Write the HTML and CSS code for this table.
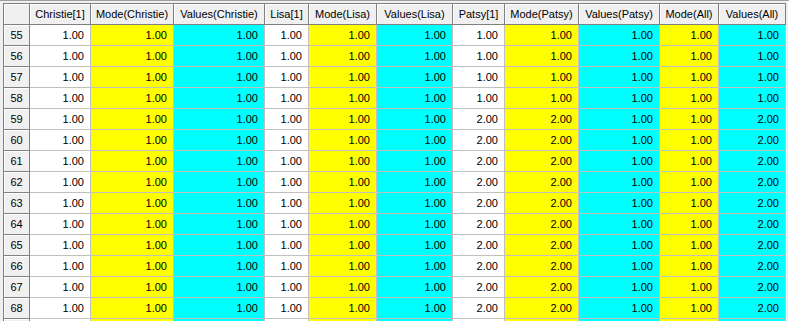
FILE: index.html
```html
<!DOCTYPE html>
<html>
<head>
<meta charset="utf-8">
<link rel="stylesheet" href="styles.css">
</head>
<body>
<div class="frame">
<table class="grid">
<thead>
<tr>
<th class="corner w0"></th>
<th class="w1">Christie[1]</th>
<th class="w2">Mode(Christie)</th>
<th class="w3">Values(Christie)</th>
<th class="w4">Lisa[1]</th>
<th class="w5">Mode(Lisa)</th>
<th class="w6">Values(Lisa)</th>
<th class="w7">Patsy[1]</th>
<th class="w8">Mode(Patsy)</th>
<th class="w9">Values(Patsy)</th>
<th class="w10">Mode(All)</th>
<th class="w11">Values(All)</th>
</tr>
</thead>
<tbody>
<tr><th>55</th><td>1.00</td><td class="y">1.00</td><td class="c">1.00</td><td>1.00</td><td class="y">1.00</td><td class="c">1.00</td><td>1.00</td><td class="y">1.00</td><td class="c">1.00</td><td class="y">1.00</td><td class="c">1.00</td></tr>
<tr><th>56</th><td>1.00</td><td class="y">1.00</td><td class="c">1.00</td><td>1.00</td><td class="y">1.00</td><td class="c">1.00</td><td>1.00</td><td class="y">1.00</td><td class="c">1.00</td><td class="y">1.00</td><td class="c">1.00</td></tr>
<tr><th>57</th><td>1.00</td><td class="y">1.00</td><td class="c">1.00</td><td>1.00</td><td class="y">1.00</td><td class="c">1.00</td><td>1.00</td><td class="y">1.00</td><td class="c">1.00</td><td class="y">1.00</td><td class="c">1.00</td></tr>
<tr><th>58</th><td>1.00</td><td class="y">1.00</td><td class="c">1.00</td><td>1.00</td><td class="y">1.00</td><td class="c">1.00</td><td>1.00</td><td class="y">1.00</td><td class="c">1.00</td><td class="y">1.00</td><td class="c">1.00</td></tr>
<tr><th>59</th><td>1.00</td><td class="y">1.00</td><td class="c">1.00</td><td>1.00</td><td class="y">1.00</td><td class="c">1.00</td><td>2.00</td><td class="y">2.00</td><td class="c">1.00</td><td class="y">1.00</td><td class="c">2.00</td></tr>
<tr><th>60</th><td>1.00</td><td class="y">1.00</td><td class="c">1.00</td><td>1.00</td><td class="y">1.00</td><td class="c">1.00</td><td>2.00</td><td class="y">2.00</td><td class="c">1.00</td><td class="y">1.00</td><td class="c">2.00</td></tr>
<tr><th>61</th><td>1.00</td><td class="y">1.00</td><td class="c">1.00</td><td>1.00</td><td class="y">1.00</td><td class="c">1.00</td><td>2.00</td><td class="y">2.00</td><td class="c">1.00</td><td class="y">1.00</td><td class="c">2.00</td></tr>
<tr><th>62</th><td>1.00</td><td class="y">1.00</td><td class="c">1.00</td><td>1.00</td><td class="y">1.00</td><td class="c">1.00</td><td>2.00</td><td class="y">2.00</td><td class="c">1.00</td><td class="y">1.00</td><td class="c">2.00</td></tr>
<tr><th>63</th><td>1.00</td><td class="y">1.00</td><td class="c">1.00</td><td>1.00</td><td class="y">1.00</td><td class="c">1.00</td><td>2.00</td><td class="y">2.00</td><td class="c">1.00</td><td class="y">1.00</td><td class="c">2.00</td></tr>
<tr><th>64</th><td>1.00</td><td class="y">1.00</td><td class="c">1.00</td><td>1.00</td><td class="y">1.00</td><td class="c">1.00</td><td>2.00</td><td class="y">2.00</td><td class="c">1.00</td><td class="y">1.00</td><td class="c">2.00</td></tr>
<tr><th>65</th><td>1.00</td><td class="y">1.00</td><td class="c">1.00</td><td>1.00</td><td class="y">1.00</td><td class="c">1.00</td><td>2.00</td><td class="y">2.00</td><td class="c">1.00</td><td class="y">1.00</td><td class="c">2.00</td></tr>
<tr><th>66</th><td>1.00</td><td class="y">1.00</td><td class="c">1.00</td><td>1.00</td><td class="y">1.00</td><td class="c">1.00</td><td>2.00</td><td class="y">2.00</td><td class="c">1.00</td><td class="y">1.00</td><td class="c">2.00</td></tr>
<tr><th>67</th><td>1.00</td><td class="y">1.00</td><td class="c">1.00</td><td>1.00</td><td class="y">1.00</td><td class="c">1.00</td><td>2.00</td><td class="y">2.00</td><td class="c">1.00</td><td class="y">1.00</td><td class="c">2.00</td></tr>
<tr><th>68</th><td>1.00</td><td class="y">1.00</td><td class="c">1.00</td><td>1.00</td><td class="y">1.00</td><td class="c">1.00</td><td>2.00</td><td class="y">2.00</td><td class="c">1.00</td><td class="y">1.00</td><td class="c">2.00</td></tr>
<tr class="stub"><th></th><td></td><td class="y"></td><td class="c"></td><td></td><td class="y"></td><td class="c"></td><td></td><td class="y"></td><td class="c"></td><td class="y"></td><td class="c"></td></tr>
</tbody>
</table>
</div>
</body>
</html>
```

FILE: styles.css
```css
html, body {
  margin: 0;
  padding: 0;
  background: #f0f0f0;
  overflow: hidden;
  height: 321px;
}

.frame {
  border-top: 1px solid #a0a0a0;
  border-right: 2px solid #ffffff;
  padding: 2px 0 0 3px;
  background: #f0f0f0;
  height: 318px;
  overflow: hidden;
}

.grid {
  border-collapse: separate;
  border-spacing: 0;
  table-layout: fixed;
  width: 783px;
  border-top: 1px solid #808080;
  border-left: 1px solid #808080;
  font-family: "Liberation Sans", Arial, sans-serif;
  font-size: 11px;
  color: #000;
}

.grid th,
.grid td {
  box-sizing: border-box;
  height: 21px;
  padding: 0;
  white-space: nowrap;
  overflow: hidden;
  line-height: 20px;
}

.grid td {
  background: #ffffff;
  border-right: 1px solid #c0c0c0;
  border-bottom: 1px solid #c0c0c0;
  text-align: right;
  padding-right: 6px;
}

.grid td.y { background: #ffff00; }
.grid td.c { background: #00ffff; }

.grid thead th,
.grid tbody th {
  background: #f0f0f0;
  font-weight: normal;
  text-align: center;
  border-right: 1px solid #808080;
  border-bottom: 1px solid #808080;
  box-shadow: inset 1px 1px 0 #ffffff;
}

.w0 { width: 26px; }
.w1 { width: 61px; }
.w2 { width: 83px; }
.w3 { width: 91px; }
.w4 { width: 44px; }
.w5 { width: 68px; }
.w6 { width: 76px; }
.w7 { width: 52px; }
.w8 { width: 74px; }
.w9 { width: 81px; }
.w10 { width: 59px; }
.w11 { width: 67px; }
```
